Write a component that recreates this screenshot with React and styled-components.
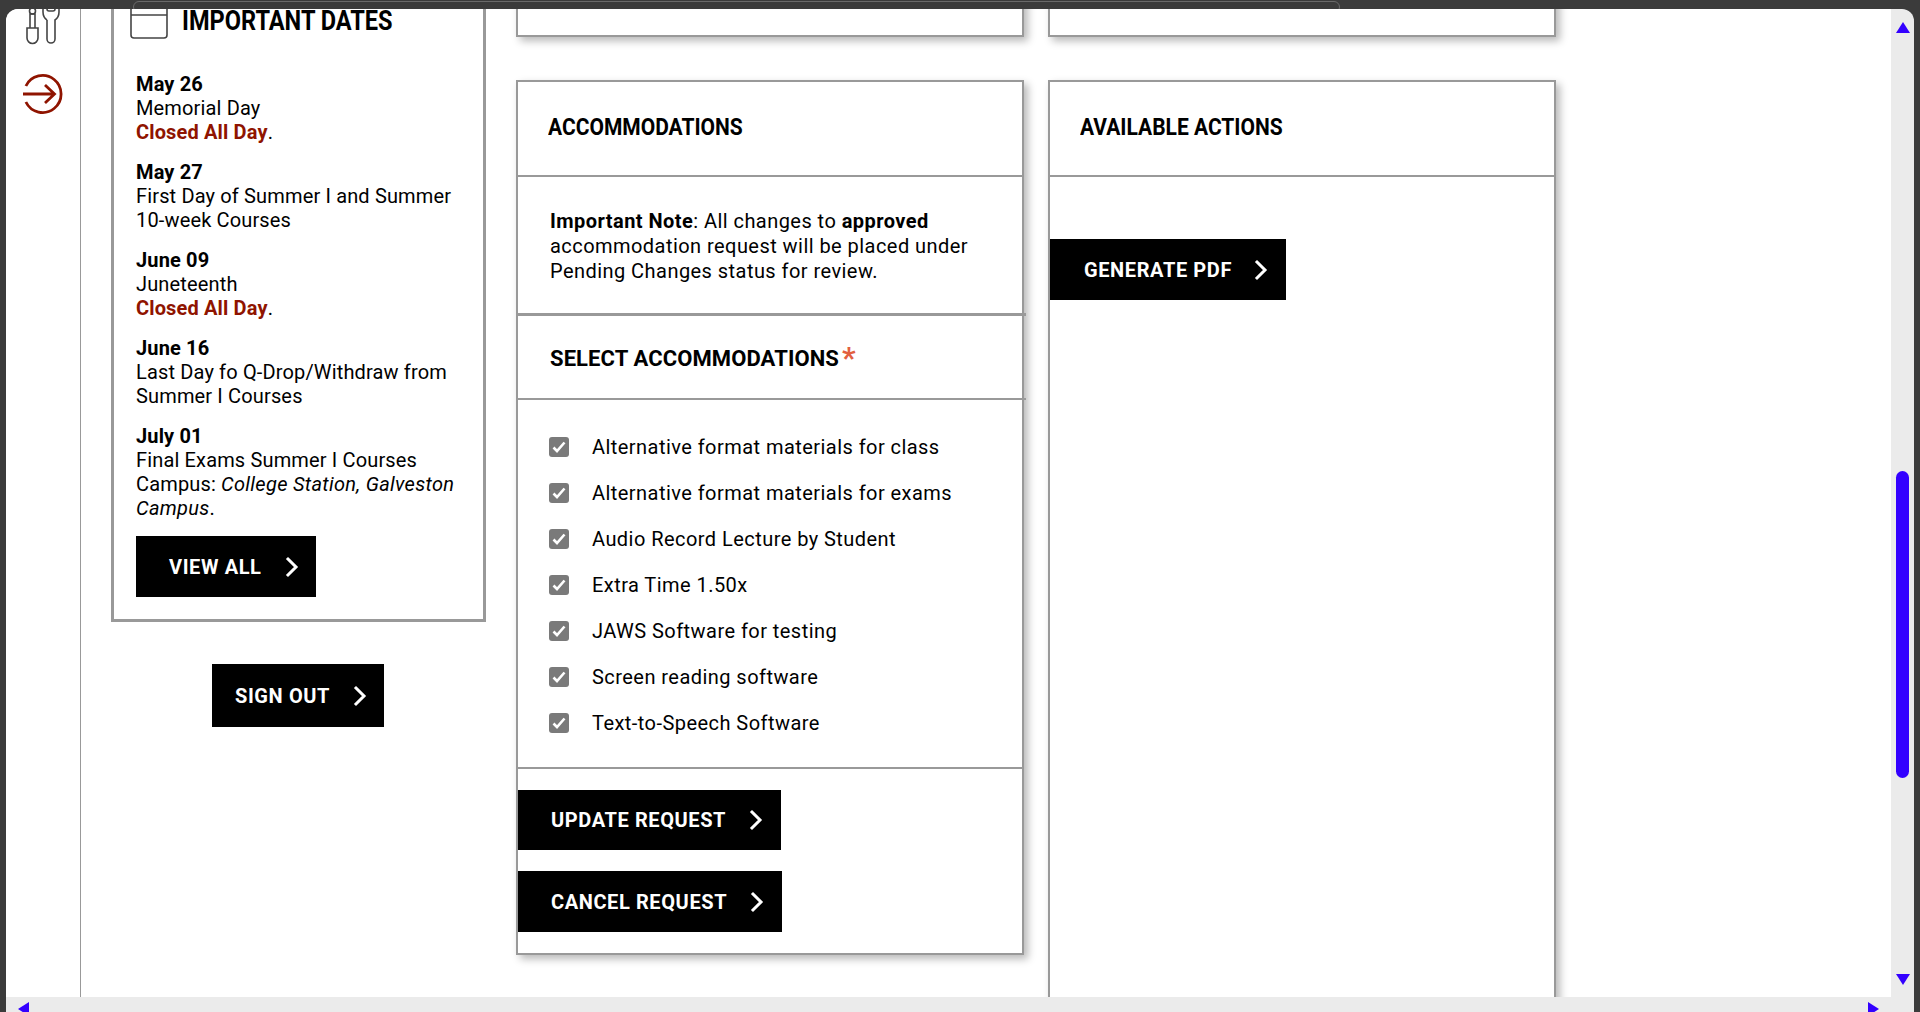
import styled, { createGlobalStyle } from "styled-components";

const GlobalStyle = createGlobalStyle`
  html, body {
    margin: 0;
    padding: 0;
    height: 100%;
    overflow: hidden;
    background: #3b3b3b;
    font-family: Roboto, "Liberation Sans", sans-serif;
    color: #000;
  }
`;

const Frame = styled.div`
  position: relative;
  width: 1920px;
  height: 1012px;
  overflow: hidden;
  background: #3b3b3b;
  display: flex;
  flex-direction: column;
  padding: 9px 6px 0;
  box-sizing: border-box;
`;
const TabOutline = styled.div`
  position: absolute;
  left: 133px;
  top: 1px;
  width: 1207px;
  height: 12px;
  border: 1px solid #6a6a6a;
  border-radius: 6px;
  box-sizing: border-box;
`;
const Win = styled.div`
  position: relative;
  flex: 1;
  min-height: 0;
  display: grid;
  grid-template-columns: 1fr 23px;
  grid-template-rows: 1fr 15px;
  background: #ebebeb;
  border-radius: 12px 12px 0 0;
  overflow: hidden;
`;
const ScrollArea = styled.div`
  background: #fff;
  overflow: hidden;
  display: flex;
  min-width: 0;
  min-height: 0;
`;
const VBar = styled.div`
  display: flex;
  flex-direction: column;
  align-items: center;
  padding-top: 13px;
`;
const Thumb = styled.div`
  width: 13px;
  height: 307px;
  margin-top: 438px;
  border-radius: 7px;
  background: #3300ff;
`;
const HBar = styled.div`
  grid-column: 1 / span 2;
  display: flex;
  justify-content: space-between;
  padding: 5px 35px 0 12px;
  overflow: hidden;
`;
const ArrowV = styled.div`
  width: 0;
  height: 0;
  border-left: 7px solid transparent;
  border-right: 7px solid transparent;
  ${p => (p.$down
    ? "border-top: 11px solid #3300ff; margin-top: 196px;"
    : "border-bottom: 11px solid #3300ff;")}
`;
const ArrowH = styled.div`
  width: 0;
  height: 0;
  border-top: 7px solid transparent;
  border-bottom: 7px solid transparent;
  ${p => (p.$right
    ? "border-left: 11px solid #3300ff;"
    : "border-right: 11px solid #3300ff;")}
`;

const Sidebar = styled.aside`
  width: 74px;
  flex: none;
  border-right: 1px solid #999;
  display: flex;
  flex-direction: column;
  align-items: center;
  gap: 28px;
`;
const ToolsSvg = styled.svg`
  flex: none;
  margin-top: -16px;
`;
const Main = styled.main`
  display: flex;
  align-items: flex-start;
  padding-left: 30px;
`;
const LeftCol = styled.div`
  width: 375px;
  flex: none;
  display: flex;
  flex-direction: column;
  align-items: center;
  margin-top: -37px;
  margin-right: 30px;
`;
const DatesCard = styled.section`
  width: 100%;
  box-sizing: border-box;
  border: 3px solid #999;
  padding: 24px 22px 22px;
`;
const DatesHead = styled.div`
  display: flex;
  align-items: center;
  height: 46px;
  margin-bottom: 27px;
`;
const CalendarSvg = styled.svg`
  flex: none;
  align-self: flex-start;
  margin: -6px 14px 0 -6px;
`;
const DatesTitle = styled.h2`
  margin: -2px 0 0;
  font-size: 27px;
  font-weight: 700;
  line-height: 30px;
  white-space: nowrap;
  transform: scaleX(0.873);
  transform-origin: left center;
`;
const DateItem = styled.div`
  font-size: 20px;
  line-height: 24px;
  letter-spacing: 0.15px;
  margin-bottom: 16px;
  em {
    letter-spacing: 0.3px;
  }
`;
const DateName = styled.strong`
  display: block;
  font-weight: 700;
`;
const Closed = styled.strong`
  color: #8f1400;
  font-weight: 700;
`;
const Btn = styled.button`
  display: flex;
  align-items: center;
  justify-content: space-between;
  box-sizing: border-box;
  width: ${p => p.$w}px;
  height: ${p => p.$h || 61}px;
  padding: 0 ${p => p.$pr || 18}px 0 ${p => p.$pl || 33}px;
  border: 0;
  background: #000;
  color: #fff;
  font-family: inherit;
  font-size: 20px;
  font-weight: 700;
  letter-spacing: 0.6px;
  white-space: nowrap;
`;
const ViewAllWrap = styled.div`
  margin-top: 16px;
`;
const SignOutWrap = styled.div`
  margin-top: 42px;
  margin-right: 1px;
`;

const MidCol = styled.div`
  width: 508px;
  flex: none;
  margin-right: 24px;
`;
const WideCol = styled.div`
  width: 508px;
  flex: none;
`;
const Card = styled.section`
  box-sizing: border-box;
  border: 2px solid #999;
  background: #fff;
  box-shadow: 4px 4px 8px rgba(0, 0, 0, 0.28);
`;
const Stub = styled(Card)`
  height: 60px;
  margin-top: -32px;
  margin-bottom: 43px;
`;
const CardHead = styled.div`
  height: 95px;
  box-sizing: border-box;
  border-bottom: 2px solid #999;
  padding: 0 0 4px 30px;
  display: flex;
  align-items: center;
`;
const CardTitle = styled.h2`
  margin: 0;
  font-size: 24px;
  font-weight: 700;
  white-space: nowrap;
  transform: scaleX(0.875);
  transform-origin: left center;
`;
const Note = styled.div`
  box-sizing: border-box;
  height: 139px;
  padding: 32px 20px 0 32px;
  margin-right: -4px;
  border-bottom: 3px solid #999;
  font-size: 20px;
  line-height: 25px;
  letter-spacing: 0.45px;
`;
const SelectHead = styled.div`
  box-sizing: border-box;
  height: 84px;
  padding: 2px 0 0 32px;
  margin-right: -4px;
  border-bottom: 2px solid #999;
  display: flex;
  align-items: center;
  gap: 3px;
`;
const SelectTitle = styled.h3`
  margin: 0;
  font-size: 22px;
  font-weight: 700;
  letter-spacing: 0.1px;
  white-space: nowrap;
`;
const Req = styled.span`
  color: #e2603f;
  font-size: 30px;
  font-weight: 700;
  line-height: 1;
  margin-top: 0;
`;
const CheckList = styled.ul`
  list-style: none;
  margin: 0;
  padding: 24px 0 21px 31px;
  border-bottom: 2px solid #999;
`;
const CheckRow = styled.li`
  display: flex;
  align-items: center;
  gap: 23px;
  height: 46px;
  font-size: 20px;
  letter-spacing: 0.45px;
`;
const CheckBox = styled.span`
  width: 20px;
  height: 20px;
  flex: none;
  border-radius: 3px;
  background: #7a7a7a;
  display: flex;
  align-items: center;
  justify-content: center;
`;
const Actions = styled.div`
  display: flex;
  flex-direction: column;
  align-items: flex-start;
  gap: 21px;
  padding: 21px 0 21px;
`;
const TallCard = styled(Card)`
  height: 1300px;
`;
const WideBody = styled.div`
  padding-top: 62px;
`;

function Chevron() {
  return (
    <svg width="14" height="22" viewBox="0 0 14 22" fill="none" stroke="#fff" strokeWidth="3" strokeLinecap="square">
      <path d="M3 3 L11 11 L3 19" />
    </svg>
  );
}

function Tick() {
  return (
    <svg width="14" height="12" viewBox="0 0 14 12" fill="none" stroke="#fff" strokeWidth="2.6">
      <path d="M1.5 6.5 L5 10 L12.5 1.5" />
    </svg>
  );
}

function ToolsIcon() {
  return (
    <ToolsSvg width="34" height="52" viewBox="0 0 34 52" fill="none" stroke="#444" strokeWidth="1.6">
      <path d="M1 35 h11 v10 a5.5 5.5 0 0 1 -11 0 z" />
      <path d="M4 35 V21 h5 V35" />
      <circle cx="6.5" cy="18" r="3" />
      <path d="M21 27 C18 25 17 22 17 19 V12 M33 12 V19 C33 22 32 25 29 27 V46 a4 4 0 0 1 -8 0 V27" />
      <path d="M21 12 v4 a2 2 0 0 0 2 2 h4 a2 2 0 0 0 2 -2 v-4" />
    </ToolsSvg>
  );
}

function ExitIcon() {
  return (
    <svg width="42" height="42" viewBox="0 0 42 42" fill="none" stroke="#8f1400" strokeWidth="2.8" style={{ flex: "none" }}>
      <path d="M3.9 13 A18.5 18.5 0 1 1 3.9 29" />
      <path d="M1 21 H32 M23 12 L32.5 21 L23 30" />
    </svg>
  );
}

function CalendarIcon() {
  return (
    <CalendarSvg width="38" height="46" viewBox="0 0 38 46" fill="none" stroke="#444" strokeWidth="1.6">
      <rect x="1" y="1" width="36" height="44" rx="3" />
      <path d="M1 22 H37" />
    </CalendarSvg>
  );
}

const dates = [
  { day: "May 26", text: <>Memorial Day<br /><Closed>Closed All Day</Closed>.</> },
  { day: "May 27", text: <>First Day of Summer I and Summer 10-week Courses</> },
  { day: "June 09", text: <>Juneteenth<br /><Closed>Closed All Day</Closed>.</> },
  { day: "June 16", text: <>Last Day fo Q-Drop/Withdraw from Summer I Courses</> },
  { day: "July 01", text: <>Final Exams Summer I Courses<br />Campus: <em>College Station, Galveston Campus</em>.</> },
];

const accommodations = [
  "Alternative format materials for class",
  "Alternative format materials for exams",
  "Audio Record Lecture by Student",
  "Extra Time 1.50x",
  "JAWS Software for testing",
  "Screen reading software",
  "Text-to-Speech Software",
];

export default function App() {
  return (
    <>
      <GlobalStyle />
      <Frame>
        <TabOutline />
        <Win>
          <ScrollArea>
            <Sidebar>
              <ToolsIcon />
              <ExitIcon />
            </Sidebar>
            <Main>
              <LeftCol>
                <DatesCard>
                  <DatesHead>
                    <CalendarIcon />
                    <DatesTitle>IMPORTANT DATES</DatesTitle>
                  </DatesHead>
                  {dates.map(d => (
                    <DateItem key={d.day}>
                      <DateName>{d.day}</DateName>
                      {d.text}
                    </DateItem>
                  ))}
                  <ViewAllWrap>
                    <Btn $w={180} $pr={17}>
                      VIEW ALL
                      <Chevron />
                    </Btn>
                  </ViewAllWrap>
                </DatesCard>
                <SignOutWrap>
                  <Btn $w={172} $h={63} $pl={23} $pr={17}>
                    SIGN OUT
                    <Chevron />
                  </Btn>
                </SignOutWrap>
              </LeftCol>
              <MidCol>
                <Stub />
                <Card>
                  <CardHead>
                    <CardTitle>ACCOMMODATIONS</CardTitle>
                  </CardHead>
                  <Note>
                    <strong>Important Note</strong>: All changes to <strong>approved</strong> accommodation request will be placed under Pending Changes status for review.
                  </Note>
                  <SelectHead>
                    <SelectTitle>SELECT ACCOMMODATIONS</SelectTitle>
                    <Req>*</Req>
                  </SelectHead>
                  <CheckList>
                    {accommodations.map(a => (
                      <CheckRow key={a}>
                        <CheckBox><Tick /></CheckBox>
                        {a}
                      </CheckRow>
                    ))}
                  </CheckList>
                  <Actions>
                    <Btn $w={263} $h={60}>
                      UPDATE REQUEST
                      <Chevron />
                    </Btn>
                    <Btn $w={264}>
                      CANCEL REQUEST
                      <Chevron />
                    </Btn>
                  </Actions>
                </Card>
              </MidCol>
              <WideCol>
                <Stub />
                <TallCard>
                  <CardHead>
                    <CardTitle>AVAILABLE ACTIONS</CardTitle>
                  </CardHead>
                  <WideBody>
                    <Btn $w={236} $pl={34} $pr={18}>
                      GENERATE PDF
                      <Chevron />
                    </Btn>
                  </WideBody>
                </TallCard>
              </WideCol>
            </Main>
          </ScrollArea>
          <VBar>
            <ArrowV />
            <Thumb />
            <ArrowV $down />
          </VBar>
          <HBar>
            <ArrowH />
            <ArrowH $right />
          </HBar>
        </Win>
      </Frame>
    </>
  );
}
